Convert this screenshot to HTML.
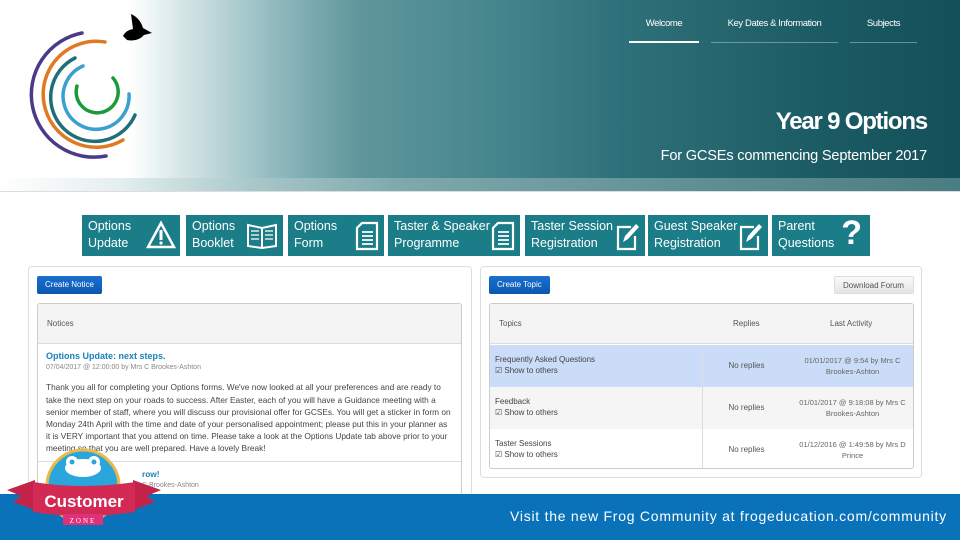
<!DOCTYPE html>
<html><head><meta charset="utf-8"><style>
*{margin:0;padding:0;box-sizing:border-box}
body{width:960px;height:540px;overflow:hidden;position:relative;background:#fff;font-family:"Liberation Sans",sans-serif}
.hdr{position:absolute;left:0;top:0;width:960px;height:178px;background:linear-gradient(90deg,#fff 0,#fff 130px,#d7e7e8 180px,#8db8bc 280px,#5f969b 360px,#4a8990 470px,#2f717a 620px,#1b5b64 820px,#145059 960px)}
.strip{position:absolute;left:0;top:178px;width:960px;height:14px;background:linear-gradient(90deg,#fff 0,#e4eeef 120px,#a9c8ca 250px,#7ea9ad 400px,#5f8f94 700px,#4a7d83 960px);border-bottom:1px solid #ddd}
.nav{position:absolute;top:18px;color:#fff;font-size:9.5px;letter-spacing:-.4px;text-align:center;height:25px;border-bottom:1px solid rgba(255,255,255,.35)}
.t1{position:absolute;right:33px;top:108px;color:#fff;font-size:24px;font-weight:bold;letter-spacing:-1.2px}
.t2{position:absolute;right:33px;top:148px;color:#fff;font-size:14.6px;letter-spacing:-.2px}
.tile{position:absolute;top:215px;height:41px;background:#1b7d88;color:#fff;font-size:12.5px;line-height:17px;padding:3px 6px;white-space:nowrap;overflow:hidden}
.tile svg{position:absolute;right:4px;top:5px}
.card{position:absolute;top:266px;height:230px;border:1px solid #ddd;border-radius:4px;background:#fff}
.btn{position:absolute;top:276px;height:18px;background:linear-gradient(#1a6fd0,#0b57b0);color:#fff;font-size:8px;line-height:18px;padding:0 8px;border-radius:2px}
.box{position:absolute;border:1px solid #ccc;border-radius:3px;background:#fff;overflow:hidden}
.gh{background:#f4f4f4;border-bottom:1px solid #ddd;height:40px;font-size:8px;color:#555;line-height:40px;padding-left:9px}
.txt{font-size:8.3px;color:#444;line-height:12.2px}
.row{position:absolute;left:0;width:424px;height:42px;font-size:8px;color:#444}
.row .a{position:absolute;left:5px;top:9px;line-height:11px}
.row .b{position:absolute;left:212px;top:0;width:88px;height:42px;border-left:1px solid #ddd;text-align:center;line-height:42px;color:#555}
.row .c{position:absolute;left:300px;top:10px;width:125px;text-align:center;font-size:7.5px;color:#666;line-height:11px}
.foot{position:absolute;left:0;top:494px;width:960px;height:46px;background:#0a72b9}
</style></head><body>
<div class="hdr"></div><div class="strip"></div>
<svg style="position:absolute;left:0;top:0" width="170" height="175" viewBox="0 0 170 175">
<g fill="none" stroke-linecap="round" stroke-width="3.5">
<path d="M82 33 A62 62 0 1 0 106 156" stroke="#4b3a87"/>
<path d="M105 42 A53 53 0 1 0 123 140" stroke="#e07a22"/>
<path d="M75 58 A44 44 0 1 0 135 115" stroke="#1f6f78"/>
<path d="M83 66 A33 33 0 1 0 129 94" stroke="#3aa0d0"/>
<path d="M113 78 A21 21 0 1 1 77 86" stroke="#1b9a3a"/>
</g>
<path d="M123 36 Q126 30 133 29 L131 14 Q140 18 143 28 L152 33 L144 35 Q138 42 127 40 Z" fill="#000"/>
</svg>
<div class="nav" style="left:629px;width:70px;border-bottom:2px solid #fff">Welcome</div>
<div class="nav" style="left:711px;width:127px">Key Dates &amp; Information</div>
<div class="nav" style="left:850px;width:67px">Subjects</div>
<div class="t1">Year 9 Options</div>
<div class="t2">For GCSEs commencing September 2017</div>

<div class="tile" style="left:82px;width:98px">Options<br>Update<svg width="30" height="30" viewBox="0 0 30 30"><path d="M15 3 L28 27 H2 Z" fill="none" stroke="#fff" stroke-width="2.5"/><rect x="13.5" y="10" width="3" height="10" fill="#fff"/><circle cx="15" cy="23" r="1.6" fill="#fff"/></svg></div>
<div class="tile" style="left:186px;width:97px">Options<br>Booklet<svg width="34" height="30" viewBox="0 0 34 30"><path d="M3 5 L17 8 L31 5 V26 L17 28 L3 26 Z M17 8 V28" fill="none" stroke="#fff" stroke-width="2"/><path d="M6 11h8M6 15h8M6 19h8M20 11h8M20 15h8M20 19h8" stroke="#fff" stroke-width="1.3"/></svg></div>
<div class="tile" style="left:288px;width:96px">Options<br>Form<svg width="26" height="32" viewBox="0 0 26 32"><path d="M8 3 H23 V29 H3 V8 Z" fill="none" stroke="#fff" stroke-width="2.2"/><path d="M8 12h11M8 16h11M8 20h11M8 24h11" stroke="#fff" stroke-width="1.8"/></svg></div>
<div class="tile" style="left:388px;width:132px">Taster &amp; Speaker<br>Programme<svg width="26" height="32" viewBox="0 0 26 32" style="background:#1b7d88"><path d="M8 3 H23 V29 H3 V8 Z" fill="none" stroke="#fff" stroke-width="2.2"/><path d="M8 12h11M8 16h11M8 20h11M8 24h11" stroke="#fff" stroke-width="1.8"/></svg></div>
<div class="tile" style="left:525px;width:120px">Taster Session<br>Registration<svg width="26" height="32" viewBox="0 0 26 32"><path d="M16 7 H3 V29 H20 V16" fill="none" stroke="#fff" stroke-width="2.2"/><path d="M8 22 L10 16 L21 4 L24 7 L13 19 Z" fill="#fff"/></svg></div>
<div class="tile" style="left:648px;width:120px">Guest Speaker<br>Registration<svg width="26" height="32" viewBox="0 0 26 32"><path d="M16 7 H3 V29 H20 V16" fill="none" stroke="#fff" stroke-width="2.2"/><path d="M8 22 L10 16 L21 4 L24 7 L13 19 Z" fill="#fff"/></svg></div>
<div class="tile" style="left:772px;width:98px">Parent<br>Questions<span style="position:absolute;right:8px;top:-2px;font-size:34px;font-weight:bold;line-height:40px">?</span></div>

<div class="card" style="left:28px;width:444px"></div>
<div class="btn" style="left:37px">Create Notice</div>
<div class="box" style="left:37px;top:303px;width:425px;height:195px">
<div class="gh">Notices</div>
<div style="padding:6px 8px" class="txt">
<div style="color:#1a82b8;font-weight:bold;font-size:9px">Options Update: next steps.</div>
<div style="font-size:7px;color:#888;margin-bottom:7px">07/04/2017 @ 12:00:00 by Mrs C Brookes-Ashton</div>
Thank you all for completing your Options forms. We've now looked at all your preferences and are ready to take the next step on your roads to success. After Easter, each of you will have a Guidance meeting with a senior member of staff, where you will discuss our provisional offer for GCSEs. You will get a sticker in form on Monday 24th April with the time and date of your personalised appointment; please put this in your planner as it is VERY important that you attend on time. Please take a look at the Options Update tab above prior to your meeting so that you are well prepared. Have a lovely Break!
</div>
<div style="border-top:1px solid #ddd;padding:6px 8px 0 104px" class="txt"><div style="color:#1a82b8;font-weight:bold">row!</div><div style="font-size:7px;color:#888">C Brookes-Ashton</div></div>
</div>

<div class="card" style="left:480px;width:442px;height:212px"></div>
<div class="btn" style="left:489px">Create Topic</div>
<div class="btn" style="left:834px;width:80px;background:linear-gradient(#fafafa,#e4e4e4);color:#555;border:1px solid #ddd">Download Forum</div>
<div class="box" style="left:489px;top:303px;width:425px;height:166px">
<div class="gh" style="position:relative">Topics<span style="position:absolute;left:243px">Replies</span><span style="position:absolute;left:340px">Last Activity</span></div>
<div class="row" style="top:41px;background:#cadcf7"><div class="a">Frequently Asked Questions<br>☑ Show to others</div><div class="b">No replies</div><div class="c">01/01/2017 @ 9:54 by Mrs C<br>Brookes-Ashton</div></div>
<div class="row" style="top:83px;background:#f5f5f5"><div class="a">Feedback<br>☑ Show to others</div><div class="b">No replies</div><div class="c">01/01/2017 @ 9:18:08 by Mrs C<br>Brookes-Ashton</div></div>
<div class="row" style="top:125px"><div class="a">Taster Sessions<br>☑ Show to others</div><div class="b">No replies</div><div class="c">01/12/2016 @ 1:49:58 by Mrs D<br>Prince</div></div>
</div>

<div class="foot"><div style="position:absolute;left:510px;top:14px;color:#fff;font-size:14px;letter-spacing:.75px">Visit the new Frog Community at frogeducation.com/community</div></div>

<svg style="position:absolute;left:5px;top:440px" width="160" height="90" viewBox="0 0 160 90">
<circle cx="78" cy="46" r="36" fill="#2aa6dd" stroke="#e9b949" stroke-width="3"/>
<ellipse cx="78" cy="28" rx="18" ry="9" fill="#fff"/><circle cx="67" cy="22" r="6" fill="#fff"/><circle cx="89" cy="22" r="6" fill="#fff"/>
<circle cx="67" cy="22" r="2.5" fill="#2aa6dd"/><circle cx="89" cy="22" r="2.5" fill="#2aa6dd"/>
<path d="M2 50 L30 40 L30 70 L8 62 L16 56 Z M156 50 L128 40 L128 70 L150 62 L142 56 Z" fill="#c42349"/>
<path d="M28 42 Q78 50 130 42 L130 72 Q78 80 28 72 Z" fill="#d32a55"/>
<text x="79" y="67" text-anchor="middle" fill="#fff" font-family="Liberation Sans" font-weight="bold" font-size="17">Customer</text>
<rect x="58" y="74" width="40" height="11" fill="#e0307a"/>
<text x="78" y="83" text-anchor="middle" fill="#fff" font-family="Liberation Serif" font-size="7" letter-spacing="2">ZONE</text>
</svg>
</body></html>
